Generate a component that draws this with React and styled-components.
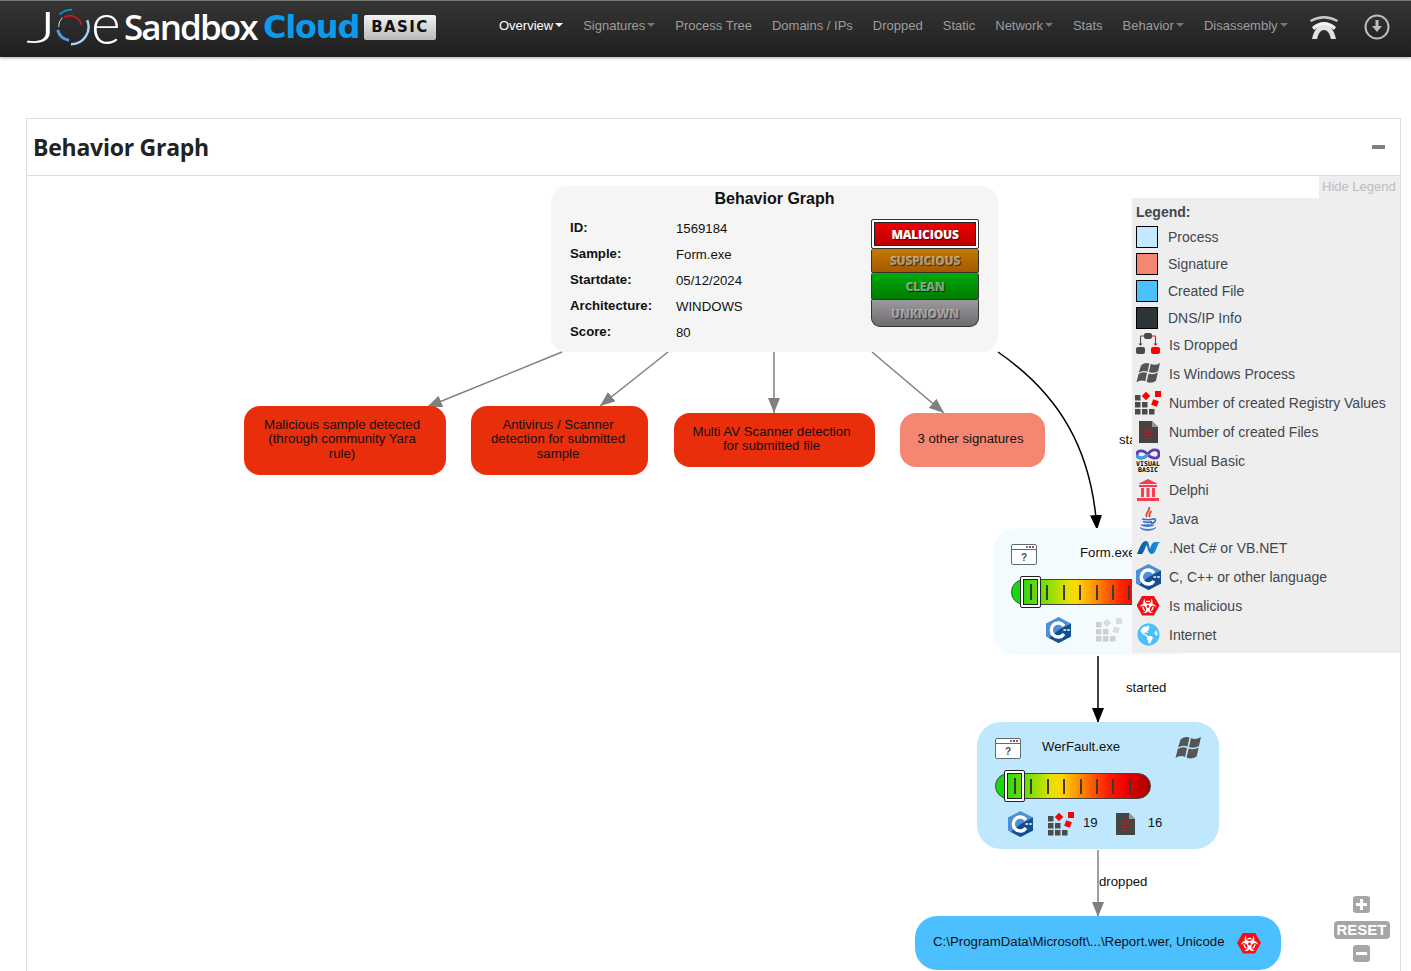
import { Fragment } from "react";
import styled, { createGlobalStyle } from "styled-components";
import { FaBiohazard, FaGlobeAmericas } from "react-icons/fa";

const GlobalStyle = createGlobalStyle`
  html, body {
    margin: 0;
    height: 100%;
    overflow: hidden;
    background: #fff;
    font-family: "Liberation Sans", Arial, sans-serif;
  }
`;

const Page = styled.div`
  height: 971px;
  overflow: hidden;
`;

const TopBar = styled.header`
  height: 56px;
  border-top: 1px solid #777;
  background: linear-gradient(#353535, #1f1f1f);
  box-shadow: 0 1px 3px rgba(0, 0, 0, 0.35);
  display: flex;
  align-items: center;
  padding-left: 26px;
`;

const Logo = styled.div`
  width: 463px;
  flex: none;
  display: flex;
  align-items: center;
  height: 40px;
  margin-top: -4px;
  white-space: nowrap;
`;

const LogoThin = styled.span`
  font-family: Lato, "Open Sans", sans-serif;
  font-weight: 300;
  color: #fff;
  font-size: ${(p) => p.$size}px;
  line-height: 40px;
  display: inline-block;
  width: ${(p) => p.$w}px;
  margin-top: ${(p) => p.$lift}px;
  transform: scaleX(${(p) => p.$sx});
  transform-origin: left center;
`;

const LogoSandbox = styled.span`
  font-family: "Open Sans", sans-serif;
  font-weight: 600;
  color: #fff;
  font-size: 35px;
  letter-spacing: -1.9px;
  line-height: 40px;
  width: 139px;
`;

const LogoCloud = styled.span`
  font-family: "DejaVu Sans", sans-serif;
  font-weight: 700;
  color: #0a9bec;
  font-size: 32px;
  letter-spacing: -1.2px;
  line-height: 40px;
  width: 101px;
`;

const BasicChip = styled.span`
  width: 72px;
  height: 25px;
  box-sizing: border-box;
  border-radius: 2px;
  background: linear-gradient(#f4f4f4, #b9b9b9);
  color: #111;
  font-family: "DejaVu Sans", sans-serif;
  font-weight: 700;
  font-size: 15px;
  letter-spacing: 1.4px;
  display: flex;
  align-items: center;
  justify-content: center;
`;

const NavList = styled.nav`
  display: flex;
  align-items: center;
  margin-top: -8px;
`;

const NavItem = styled.a`
  padding: 0 10px;
  font-size: 13px;
  white-space: nowrap;
  color: ${(p) => (p.$active ? "#fff" : "#9d9d9d")};
  display: flex;
  align-items: center;
`;

const Caret = styled.i`
  width: 0;
  height: 0;
  margin-left: 2px;
  border-top: 4px solid ${(p) => (p.$active ? "#fff" : "#777")};
  border-left: 4px solid transparent;
  border-right: 4px solid transparent;
`;

const NavIcons = styled.div`
  display: flex;
  align-items: center;
  margin: -4px 0 0 11px;
  gap: 25px;
`;

const Panel = styled.section`
  margin: 61px 10px 0 26px;
  border: 1px solid #ddd;
  border-bottom: 0;
`;

const PanelHead = styled.div`
  height: 56px;
  border-bottom: 1px solid #ddd;
  display: flex;
  align-items: center;
  justify-content: space-between;
  padding: 0 15px 0 6px;
`;

const PanelTitle = styled.h2`
  margin: 0;
  font-family: "Open Sans", sans-serif;
  font-weight: 700;
  font-size: 23px;
  letter-spacing: -0.25px;
  color: #222;
`;

const Collapse = styled.span`
  width: 13px;
  height: 4px;
  background: #808080;
`;

const Canvas = styled.div`
  position: relative;
  height: 795px;
  overflow: hidden;
`;

const Edges = styled.svg`
  position: absolute;
  left: 0;
  top: 0;
`;

const InfoNode = styled.div`
  position: absolute;
  left: 524px;
  top: 10px;
  width: 447px;
  height: 166px;
  box-sizing: border-box;
  background: #f5f5f5;
  border-radius: 16px;
  padding: 4px 19px 0;
  color: #111;
  font-size: 13.2px;
`;

const InfoTitle = styled.div`
  font-weight: 700;
  font-size: 16px;
  line-height: 18px;
  text-align: center;
`;

const InfoBody = styled.div`
  display: flex;
  justify-content: space-between;
  margin-top: 7px;
`;

const InfoGrid = styled.div`
  display: grid;
  grid-template-columns: 106px auto;
  grid-auto-rows: 26px;
  align-items: center;
`;

const InfoLabel = styled.span`
  font-weight: 700;
  margin-top: -2px;
`;

const InfoValue = styled.span``;

const ScoreStack = styled.div`
  width: 108px;
  margin-top: 4px;
  display: flex;
  flex-direction: column;
`;

const ScoreStep = styled.div`
  height: ${(p) => p.$h}px;
  box-sizing: border-box;
  background: linear-gradient(${(p) => p.$from}, ${(p) => p.$to});
  border: 1px solid #333;
  border-top-width: ${(p) => (p.$first ? 1 : 0)}px;
  border-radius: ${(p) => (p.$last ? "0 0 9px 9px" : "2px")};
  box-shadow: ${(p) => (p.$on ? "inset 0 0 0 2px #fff, inset 0 0 0 3px #222" : "none")};
  color: ${(p) => (p.$on ? "#fff" : "rgba(215, 215, 215, 0.62)")};
  font-family: "Open Sans", sans-serif;
  font-weight: 800;
  font-size: 12px;
  letter-spacing: -0.2px;
  text-shadow: 1px 1px 1px rgba(0, 0, 0, 0.6);
  display: flex;
  align-items: center;
  justify-content: center;
`;

const SignatureNode = styled.div`
  position: absolute;
  left: ${(p) => p.$x}px;
  top: ${(p) => p.$y}px;
  width: ${(p) => p.$w}px;
  height: ${(p) => p.$h}px;
  box-sizing: border-box;
  padding: 0 ${(p) => 16 + p.$shift}px 2px 16px;
  border-radius: 16px;
  background: ${(p) => (p.$soft ? "#f58772" : "#e92e0c")};
  color: #111;
  font-size: 13.25px;
  line-height: 14.5px;
  text-align: center;
  display: flex;
  align-items: center;
  justify-content: center;
`;

const ProcessNode = styled.div`
  position: absolute;
  left: ${(p) => p.$x}px;
  top: ${(p) => p.$y}px;
  width: ${(p) => p.$w}px;
  height: 127px;
  box-sizing: border-box;
  padding: 14px 18px 0;
  border-radius: 24px;
  background: ${(p) => p.$bg};
  color: #111;
  font-size: 13.2px;
`;

const NodeHead = styled.div`
  height: 24px;
  display: flex;
  align-items: center;
  gap: ${(p) => p.$gap}px;
`;

const NodeName = styled.span`
  flex: 1;
  margin-top: -4px;
  white-space: nowrap;
`;

const Gauge = styled.div`
  position: relative;
  width: 156px;
  height: 26px;
  margin-top: 13px;
  box-sizing: border-box;
  border: 1px solid #444;
  border-radius: 13px;
  background: linear-gradient(90deg, #12dd0a 0%, #12dd0a 8%, #e6e000 36%, #ffd800 42%, #ff2000 72%, #ee0000 84%, #a80000 100%);
  display: flex;
  align-items: center;
  padding-left: 18px;
  gap: 14.4px;
`;

const GaugeTick = styled.i`
  width: 2px;
  height: 15px;
  background: #3a3a3a;
`;

const GaugeThumb = styled.div`
  position: absolute;
  left: 8px;
  top: -4px;
  width: 21px;
  height: 32px;
  box-sizing: border-box;
  border: 1px solid #222;
  border-radius: 2px;
  background: #fff;
  padding: 2px;
  &::after {
    content: "";
    display: block;
    height: 100%;
    box-sizing: border-box;
    border: 1px solid #222;
    background: linear-gradient(90deg, #2fdc0a, #6fd508);
  }
  &::before {
    content: "";
    position: absolute;
    left: 9px;
    top: 7px;
    width: 2px;
    height: 16px;
    background: #3a3a3a;
  }
`;

const NodeFoot = styled.div`
  display: flex;
  align-items: center;
  height: 26px;
  margin-top: 12px;
  padding-left: ${(p) => p.$indent}px;
  gap: ${(p) => p.$gap}px;
`;

const Count = styled.span`
  margin: -4px ${(p) => p.$after || 0}px 0 ${(p) => p.$before}px;
`;

const FileNode = styled.div`
  position: absolute;
  left: 888px;
  top: 740px;
  width: 366px;
  height: 54px;
  box-sizing: border-box;
  padding: 0 20px 0 18px;
  border-radius: 22px;
  background: #4cc0ff;
  color: #111;
  font-size: 13.25px;
  display: flex;
  align-items: center;
  justify-content: space-between;
`;

const FileLabel = styled.span`
  margin-top: -4px;
`;

const EdgeLabel = styled.span`
  position: absolute;
  left: ${(p) => p.$x}px;
  top: ${(p) => p.$y}px;
  color: #111;
  font-size: 13.2px;
  line-height: 15px;
`;

const HideLegend = styled.div`
  position: absolute;
  right: 0;
  top: 0;
  width: 81px;
  height: 22px;
  box-sizing: border-box;
  padding-left: 3px;
  background: #eee;
  color: #b9bdc4;
  font-size: 13px;
  line-height: 21px;
`;

const Legend = styled.aside`
  position: absolute;
  right: 0;
  top: 22px;
  width: 268px;
  height: 455px;
  box-sizing: border-box;
  padding: 4px 4px 0;
  background: #eee;
  color: #3f474d;
  font-size: 14px;
`;

const LegendTitle = styled.div`
  font-weight: 700;
  line-height: 20px;
  margin-bottom: 1px;
`;

const SwatchRow = styled.div`
  height: 27px;
  display: flex;
  align-items: center;
  gap: 10px;
`;

const Swatch = styled.i`
  width: 22px;
  height: 22px;
  box-sizing: border-box;
  border: 1px solid #000;
  background: ${(p) => p.$color};
`;

const IconList = styled.div`
  margin-top: -1px;
`;

const IconRow = styled.div`
  height: 29px;
  display: flex;
  align-items: center;
  gap: 9px;
`;

const IconSlot = styled.span`
  width: 24px;
  flex: none;
  display: flex;
  justify-content: center;
`;

const HazardBadge = styled.span`
  width: ${(p) => p.$size}px;
  height: ${(p) => Math.round(p.$size * 0.87)}px;
  flex: none;
  background: #f50f14;
  color: #fff;
  clip-path: polygon(25% 0, 75% 0, 100% 50%, 75% 100%, 25% 100%, 0 50%);
  display: flex;
  align-items: center;
  justify-content: center;
  font-size: ${(p) => Math.round(p.$size * 0.7)}px;
`;

const Globe = styled.span`
  width: 23px;
  height: 23px;
  border-radius: 50%;
  background: #fff;
  color: #4cc0ff;
  font-size: 23px;
  display: flex;
`;

const ZoomControls = styled.div`
  position: absolute;
  left: 1307px;
  top: 720px;
  width: 55px;
  display: flex;
  flex-direction: column;
  align-items: center;
  gap: 6px;
`;

const ZoomButton = styled.span`
  width: 17px;
  height: 17px;
  border-radius: 3px;
  background: #a6a6a6;
  display: flex;
  align-items: center;
  justify-content: center;
  &::before {
    content: "";
    width: 11px;
    height: 3px;
    background: #fff;
  }
  ${(p) =>
    p.$plus &&
    `
    position: relative;
    margin-bottom: 2px;
    &::after {
      content: "";
      position: absolute;
      width: 3px;
      height: 11px;
      background: #fff;
    }
  `}
`;

const ResetButton = styled.span`
  width: 56px;
  height: 18px;
  flex: none;
  border-radius: 4px;
  background: #a6a6a6;
  color: #fff;
  font-weight: 700;
  font-size: 15px;
  line-height: 18px;
  text-align: center;
`;

const LogoRing = () => (
  <svg width="40" height="40" viewBox="0 0 42 42" style={{ margin: "0 0 0 -2px", flex: "none" }}>
    <path d="M9 8 A17 17 0 0 1 22 3" fill="none" stroke="#0a9bec" strokeWidth="1.6" />
    <path d="M8 21 A13 13 0 0 1 12 11" fill="none" stroke="#ddd" strokeWidth="1" />
    <path d="M14 11 A12 12 0 0 1 32 19" fill="none" stroke="#e8141c" strokeWidth="1.5" />
    <path d="M7 24 A15 15 0 0 0 19 35" fill="none" stroke="#4d9de6" strokeWidth="3" />
    <path d="M21 39 A18 18 0 0 0 38 14" fill="none" stroke="#a8d4f5" strokeWidth="2.6" />
  </svg>
);

const WifiIcon = () => (
  <svg width="30" height="26" viewBox="0 0 30 26">
    <path d="M1 6 Q15 -2 29 6 L28 8 Q15 1 2 8Z" fill="#c8c8c8" />
    <path d="M3 13 Q15 3 27 13 L25 16 Q15 8 5 16Z" fill="#f2f2f2" />
    <path d="M3 25 Q6 11 15 11 Q24 11 27 25 L22 25 Q20 16 15 16 Q10 16 8 25Z" fill="#e2e2e2" />
  </svg>
);

const DownloadIcon = () => (
  <svg width="26" height="26" viewBox="0 0 26 26">
    <circle cx="13" cy="13" r="11.5" fill="none" stroke="#bdbdbd" strokeWidth="2" />
    <path d="M11.5 6h3v6h3.500L13 18 8 12h3.500z" fill="#bdbdbd" />
  </svg>
);

const WindowIcon = () => (
  <svg width="26" height="21" viewBox="0 0 26 21" style={{ flex: "none" }}>
    <rect x="0.5" y="0.5" width="25" height="20" rx="1.5" fill="#fff" stroke="#5d6b75" />
    <rect x="1" y="5" width="24" height="1" fill="#5d6b75" />
    <rect x="15" y="2" width="2" height="2" fill="#777" />
    <rect x="18" y="2" width="2" height="2" fill="#46a" />
    <rect x="21" y="2" width="2" height="2" fill="#e33" />
    <text x="13" y="17" textAnchor="middle" fontSize="10" fontWeight="700" fontFamily="Liberation Sans" fill="#4a4a4a">?</text>
  </svg>
);

const WindowsFlag = ({ size = 26 }) => (
  <svg width={size} height={size * 0.92} viewBox="0 0 26 24" fill="#555" style={{ flex: "none" }}>
    <path d="M5.500 3.500 Q9.500 0 14.500 1.500 L12.500 10.500 Q7.500 8.500 3 11.500Z" />
    <path d="M16 2 Q20.500 4.500 26 1 L24 10 Q18.500 13 14 11Z" />
    <path d="M2.700 13 Q7 10 12 12 L10 21 Q5 19 0.500 22Z" />
    <path d="M13.700 12.500 Q18.500 14.500 23.700 11.500 L21.700 20.500 Q16.500 24 11.500 21.500Z" />
  </svg>
);

const CppIcon = () => (
  <svg width="25" height="26" viewBox="0 0 25 26" style={{ flex: "none" }}>
    <polygon points="12.5,0 25,6.5 25,19.5 12.5,26 0,19.5 0,6.5" fill="#4f8fd8" />
    <polygon points="12.5,13 25,6.5 25,19.5 12.5,26 3,21" fill="#14508f" />
    <path d="M18 9 A7 7 0 1 0 18 17" fill="none" stroke="#fff" strokeWidth="3.4" />
    <path d="M17.5 13h2.600M21.200 13h2.600" stroke="#fff" strokeWidth="1.6" />
  </svg>
);

const RegistryIcon = ({ faded }) => {
  const dark = faded ? "#cfcfcf" : "#4a4a4a";
  const red = faded ? "#dcdcdc" : "#f00";
  return (
    <svg width="26" height="24" viewBox="0 0 26 24" style={{ flex: "none" }}>
      {[[0, 4], [0, 11], [7, 11], [0, 18], [7, 18], [14, 18]].map(([x, y]) => (
        <rect key={`${x}-${y}`} x={x} y={y} width="5.5" height="5.5" fill={dark} />
      ))}
      <rect x="8" y="2" width="6" height="6" transform="rotate(45 11 5)" fill={red} />
      <rect x="20" y="0" width="6" height="6" fill={red} />
      <rect x="17" y="9" width="6" height="6" transform="rotate(20 20 12)" fill={red} />
    </svg>
  );
};

const FileIcon = () => (
  <svg width="19" height="22" viewBox="0 0 19 22" style={{ flex: "none" }}>
    <path d="M0 0H13L19 6V22H0Z" fill="#444" />
    <path d="M13 0L19 6H13Z" fill="#999" />
    <path d="M5 8h8M5 11h9M5 14h8M5 17h6" stroke="#e01010" strokeWidth="1.2" />
  </svg>
);

const DroppedIcon = () => (
  <svg width="24" height="23" viewBox="0 0 24 23">
    <rect x="8" y="0" width="8" height="6" rx="2" fill="#4a4a4a" />
    <path d="M8 3H4.500V12" fill="none" stroke="#4a4a4a" />
    <path d="M2.500 10.500h4L4.500 13z" fill="#4a4a4a" />
    <path d="M16 3H19.500V12" fill="none" stroke="#f00" />
    <path d="M17.500 10.500h4l-2 2.500z" fill="#f00" />
    <rect x="0" y="14" width="9" height="7" rx="2" fill="#4a4a4a" />
    <rect x="15" y="14" width="9" height="7" rx="2" fill="#f00" />
  </svg>
);

const VisualBasicIcon = () => (
  <svg width="24" height="25" viewBox="0 0 24 25">
    <path d="M12 7 C8 1 1 2 1 6.500 C1 11 8 11.500 12 6 C16 0 23 1 23 6 C23 11.500 16 11 12 7" fill="none" stroke="#5b3db0" strokeWidth="2.800" />
    <path d="M1 6.500 C1 11 8 11.500 12 6" fill="none" stroke="#38a0e8" strokeWidth="2.800" />
    <text x="12" y="17.500" textAnchor="middle" fontSize="6.600" fontWeight="700" fontFamily="DejaVu Sans Mono" fill="#000">VISUAL</text>
    <text x="12" y="23.500" textAnchor="middle" fontSize="6.600" fontWeight="700" fontFamily="DejaVu Sans Mono" fill="#000">BASIC</text>
  </svg>
);

const DelphiIcon = () => (
  <svg width="22" height="22" viewBox="0 0 22 22" fill="#fb3a4f">
    <path d="M11 0L21 5H1Z" />
    <rect x="2" y="6" width="18" height="2" />
    <rect x="4" y="9" width="3" height="9" />
    <rect x="9.500" y="9" width="3" height="9" />
    <rect x="15" y="9" width="3" height="9" />
    <rect x="0" y="19" width="22" height="3" />
  </svg>
);

const JavaIcon = () => (
  <svg width="20" height="24" viewBox="0 0 20 24">
    <path d="M11 0 C13 4 6 6 9 10 M13.500 4 C12 6 10 7 12 10" fill="none" stroke="#e2402f" strokeWidth="1.8" />
    <path d="M4 12 C8 13 12 13 15 12 M5 14.500 C8 15.500 12 15.500 14 14.500 M15 12 C19 11 18 16 13 16.500" fill="none" stroke="#2f6fc8" strokeWidth="1.6" />
    <path d="M3 18 C7 20 12 20 16 18 C13 17.500 6 17.500 3 18Z M2 20.500 C6 23 14 23 18 20.500 C14 24.500 5 24.500 2 20.500Z" fill="#2f6fc8" stroke="#2f6fc8" strokeWidth="0.6" />
  </svg>
);

const DotNetIcon = () => (
  <svg width="23" height="14" viewBox="0 0 23 14">
    <defs>
      <linearGradient id="netFill" x1="0" x2="1" y1="0" y2="0">
        <stop offset="0" stopColor="#0b4f96" />
        <stop offset="1" stopColor="#1b9bea" />
      </linearGradient>
    </defs>
    <path d="M0 13 C3 6 5 0 9 0 C12 0 12 5 13 8 C14 5 15 1 18 1 L23 1 C20 3 19 13 15 13 C11 13 11 7 9.500 4 C8 7 7 11 5 13Z" fill="url(#netFill)" />
  </svg>
);

const steps = [
  { label: "MALICIOUS", h: 30, from: "#f40000", to: "#b40000", on: true, first: true },
  { label: "SUSPICIOUS", h: 24, from: "#c27c00", to: "#a45800" },
  { label: "CLEAN", h: 27, from: "#00aa0a", to: "#007c00" },
  { label: "UNKNOWN", h: 27, from: "#9b9a9e", to: "#6f6b70", last: true },
];

const navItems = [
  { label: "Overview", caret: true, active: true },
  { label: "Signatures", caret: true },
  { label: "Process Tree" },
  { label: "Domains / IPs" },
  { label: "Dropped" },
  { label: "Static" },
  { label: "Network", caret: true },
  { label: "Stats" },
  { label: "Behavior", caret: true },
  { label: "Disassembly", caret: true },
];

const facts = [
  ["ID:", "1569184"],
  ["Sample:", "Form.exe"],
  ["Startdate:", "05/12/2024"],
  ["Architecture:", "WINDOWS"],
  ["Score:", "80"],
];

const swatches = [
  ["Process", "#c2e9ff"],
  ["Signature", "#f58772"],
  ["Created File", "#4cc0ff"],
  ["DNS/IP Info", "#2e3539"],
];

const legendIcons = [
  ["Is Dropped", <DroppedIcon />],
  ["Is Windows Process", <WindowsFlag size={24} />],
  ["Number of created Registry Values", <RegistryIcon />],
  ["Number of created Files", <FileIcon />],
  ["Visual Basic", <VisualBasicIcon />],
  ["Delphi", <DelphiIcon />],
  ["Java", <JavaIcon />],
  [".Net C# or VB.NET", <DotNetIcon />],
  ["C, C++ or other language", <CppIcon />],
  ["Is malicious", <HazardBadge $size={23}><FaBiohazard /></HazardBadge>],
  ["Internet", <Globe><FaGlobeAmericas /></Globe>],
];

const ScoreGauge = () => (
  <Gauge>
    {Array.from({ length: 8 }, (_, i) => (
      <GaugeTick key={i} />
    ))}
    <GaugeThumb />
  </Gauge>
);

const App = () => {
  return (
    <Page>
      <GlobalStyle />
      <TopBar>
        <Logo>
          <LogoThin $size={44} $w={27} $sx={1.7} $lift={-2}>J</LogoThin>
          <LogoRing />
          <LogoThin $size={58} $w={33} $sx={0.98} $lift={-10}>e</LogoThin>
          <LogoSandbox>Sandbox</LogoSandbox>
          <LogoCloud>Cloud</LogoCloud>
          <BasicChip>BASIC</BasicChip>
        </Logo>
        <NavList>
          {navItems.map((item) => (
            <NavItem key={item.label} $active={item.active}>
              {item.label}
              {item.caret && <Caret $active={item.active} />}
            </NavItem>
          ))}
        </NavList>
        <NavIcons>
          <WifiIcon />
          <DownloadIcon />
        </NavIcons>
      </TopBar>

      <Panel>
        <PanelHead>
          <PanelTitle>Behavior Graph</PanelTitle>
          <Collapse />
        </PanelHead>
        <Canvas>
          <Edges width="1373" height="795" viewBox="27 176 1373 795">
            <defs>
              <marker id="headGrey" markerWidth="16" markerHeight="12" refX="15" refY="6" orient="auto" markerUnits="userSpaceOnUse">
                <path d="M0 0L15 6L0 12Z" fill="#808080" />
              </marker>
              <marker id="headBlack" markerWidth="16" markerHeight="12" refX="15" refY="6" orient="auto" markerUnits="userSpaceOnUse">
                <path d="M0 0L15 6L0 12Z" fill="#000" />
              </marker>
            </defs>
            <g fill="none" stroke="#808080" strokeWidth="1.5">
              <path d="M562 352L427 407" markerEnd="url(#headGrey)" />
              <path d="M668 352L600 406" markerEnd="url(#headGrey)" />
              <path d="M774 352V413" markerEnd="url(#headGrey)" />
              <path d="M872 352L944 413" markerEnd="url(#headGrey)" />
              <path d="M1098 850V917" markerEnd="url(#headGrey)" />
            </g>
            <g fill="none" stroke="#000" strokeWidth="1.5">
              <path d="M998 352C1060 395 1092 450 1097 530" markerEnd="url(#headBlack)" />
              <path d="M1098 656V723" markerEnd="url(#headBlack)" />
            </g>
          </Edges>

          <InfoNode>
            <InfoTitle>Behavior Graph</InfoTitle>
            <InfoBody>
              <InfoGrid>
                {facts.map(([label, value]) => (
                  <Fragment key={label}>
                    <InfoLabel>{label}</InfoLabel>
                    <InfoValue>{value}</InfoValue>
                  </Fragment>
                ))}
              </InfoGrid>
              <ScoreStack>
                {steps.map((s) => (
                  <ScoreStep key={s.label} $h={s.h} $from={s.from} $to={s.to} $on={s.on} $first={s.first} $last={s.last}>
                    {s.label}
                  </ScoreStep>
                ))}
              </ScoreStack>
            </InfoBody>
          </InfoNode>

          <SignatureNode $x={217} $y={230} $w={202} $h={69} $shift={6}>
            Malicious sample detected (through community Yara rule)
          </SignatureNode>
          <SignatureNode $x={444} $y={230} $w={177} $h={69} $shift={3}>
            Antivirus / Scanner detection for submitted sample
          </SignatureNode>
          <SignatureNode $x={647} $y={237} $w={201} $h={54} $shift={6}>
            Multi AV Scanner detection for submitted file
          </SignatureNode>
          <SignatureNode $x={873} $y={237} $w={145} $h={54} $shift={4} $soft>
            3 other signatures
          </SignatureNode>

          <EdgeLabel $x={1092} $y={256}>started</EdgeLabel>

          <ProcessNode $x={966} $y={352} $w={208} $bg="#f4fbff">
            <NodeHead $gap={43}>
              <WindowIcon />
              <NodeName>Form.exe</NodeName>
            </NodeHead>
            <ScoreGauge />
            <NodeFoot $indent={35} $gap={25}>
              <CppIcon />
              <RegistryIcon faded />
            </NodeFoot>
          </ProcessNode>

          <EdgeLabel $x={1099} $y={504}>started</EdgeLabel>

          <ProcessNode $x={950} $y={546} $w={242} $bg="#bfe8ff">
            <NodeHead $gap={21}>
              <WindowIcon />
              <NodeName>WerFault.exe</NodeName>
              <WindowsFlag />
            </NodeHead>
            <ScoreGauge />
            <NodeFoot $indent={13} $gap={15}>
              <CppIcon />
              <RegistryIcon />
              <Count $before={-6} $after={3}>19</Count>
              <FileIcon />
              <Count $before={-2}>16</Count>
            </NodeFoot>
          </ProcessNode>

          <EdgeLabel $x={1072} $y={698}>dropped</EdgeLabel>

          <FileNode>
            <FileLabel>C:\ProgramData\Microsoft\...\Report.wer, Unicode</FileLabel>
            <HazardBadge $size={24}>
              <FaBiohazard />
            </HazardBadge>
          </FileNode>

          <HideLegend>Hide Legend</HideLegend>
          <Legend>
            <LegendTitle>Legend:</LegendTitle>
            {swatches.map(([label, color]) => (
              <SwatchRow key={label}>
                <Swatch $color={color} />
                {label}
              </SwatchRow>
            ))}
            <IconList>
              {legendIcons.map(([label, icon]) => (
                <IconRow key={label}>
                  <IconSlot>{icon}</IconSlot>
                  {label}
                </IconRow>
              ))}
            </IconList>
          </Legend>

          <ZoomControls>
            <ZoomButton $plus />
            <ResetButton>RESET</ResetButton>
            <ZoomButton />
          </ZoomControls>
        </Canvas>
      </Panel>
    </Page>
  );
};

export default App;
